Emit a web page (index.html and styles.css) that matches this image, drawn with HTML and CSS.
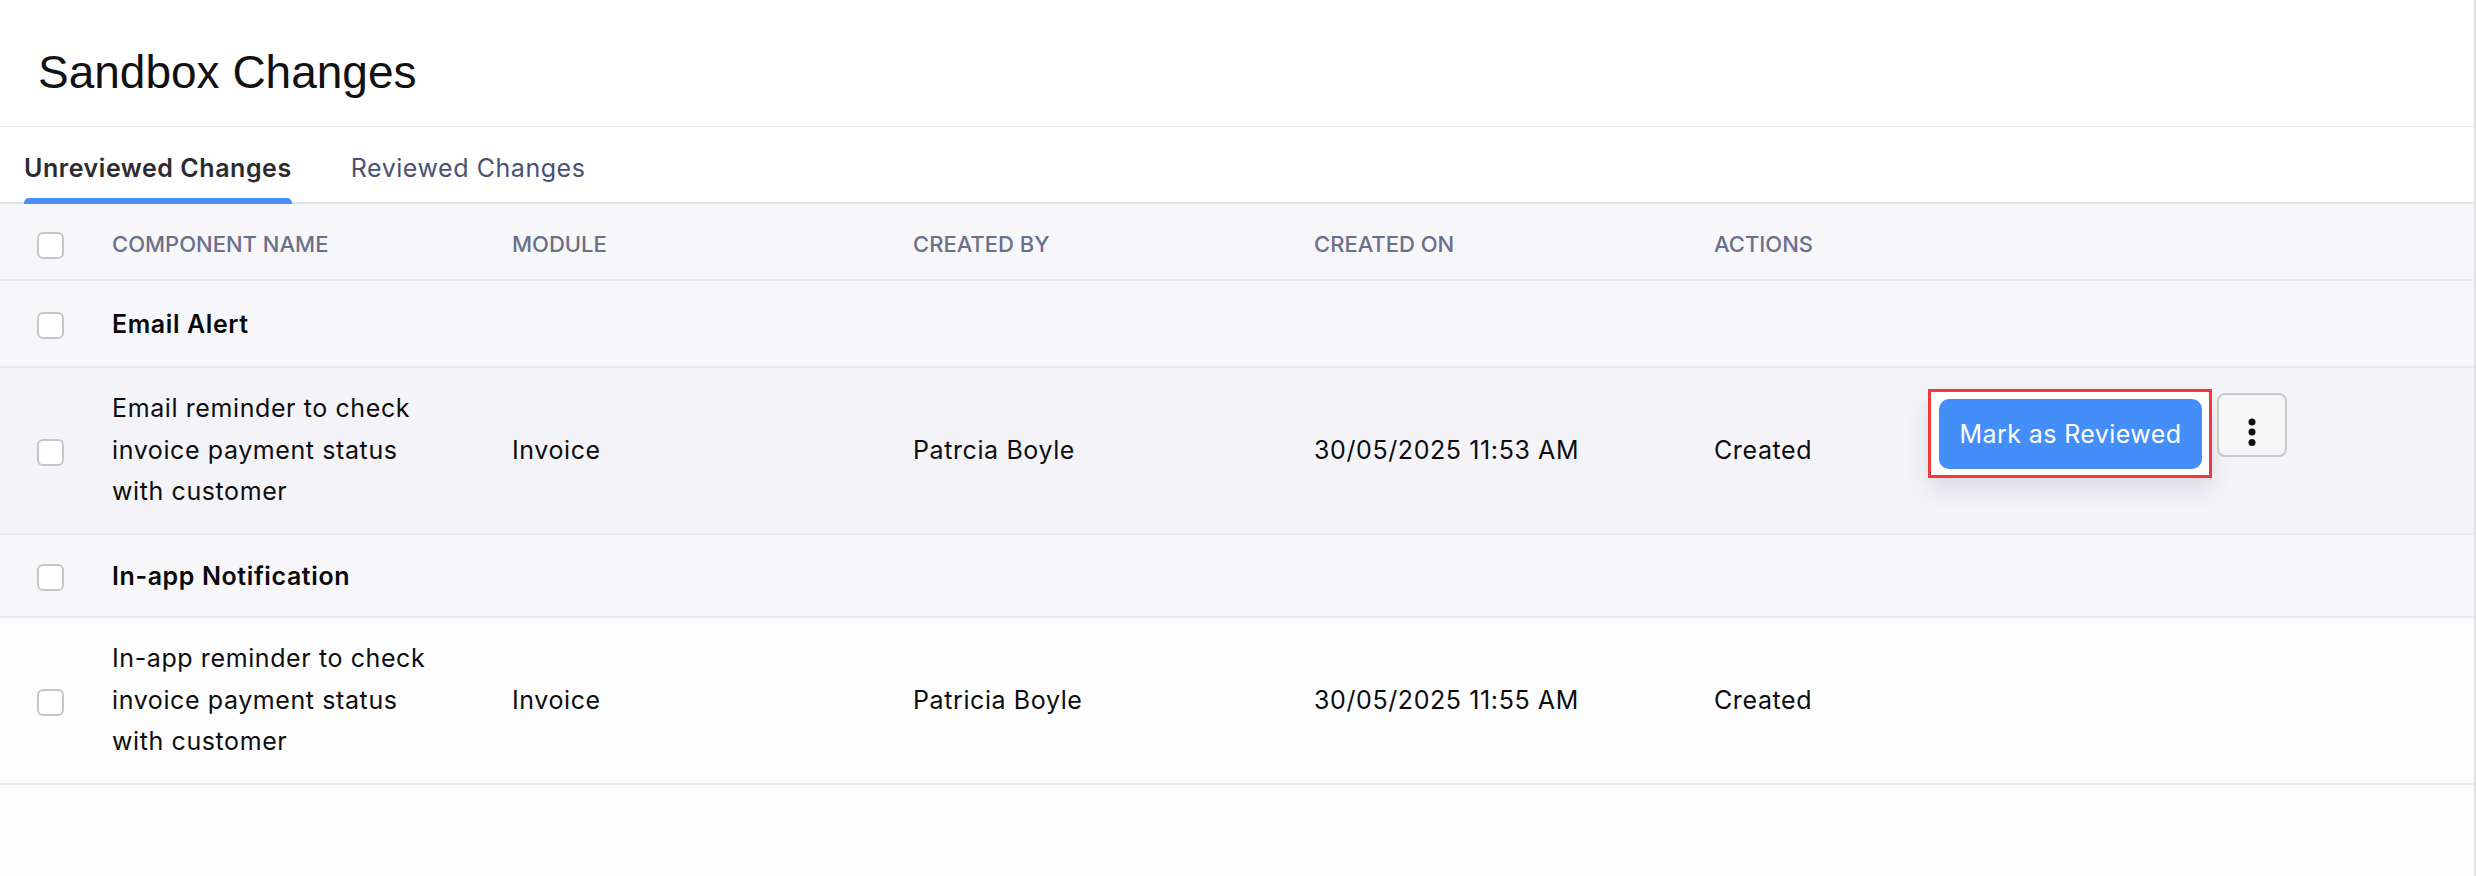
FILE: index.html
```html
<!DOCTYPE html>
<html lang="en">
<head>
<meta charset="utf-8">
<title>Sandbox Changes</title>
<link rel="stylesheet" href="styles.css">
</head>
<body>
<div class="page">
  <header class="title-bar">
    <h1 class="title">Sandbox Changes</h1>
  </header>
  <nav class="tabs">
    <div class="tab active"><span class="tab-label">Unreviewed Changes</span><span class="tab-bar"></span></div>
    <div class="tab"><span class="tab-label">Reviewed Changes</span></div>
  </nav>
  <table class="grid">
    <colgroup>
      <col class="c-check">
      <col class="c-name">
      <col class="c-col">
      <col class="c-col">
      <col class="c-date">
      <col class="c-status">
      <col>
    </colgroup>
    <thead>
      <tr class="head-row">
        <th class="cell-check"><span class="checkbox"></span></th>
        <th>COMPONENT NAME</th>
        <th>MODULE</th>
        <th>CREATED BY</th>
        <th>CREATED ON</th>
        <th>ACTIONS</th>
        <th></th>
      </tr>
    </thead>
    <tbody>
      <tr class="group-row g1">
        <td class="cell-check"><span class="checkbox"></span></td>
        <td class="group-name" colspan="6">Email Alert</td>
      </tr>
      <tr class="item-row hovered">
        <td class="cell-check"><span class="checkbox"></span></td>
        <td class="cell-name">Email reminder to check invoice payment status with customer</td>
        <td>Invoice</td>
        <td>Patrcia Boyle</td>
        <td>30/05/2025 11:53 AM</td>
        <td>Created</td>
        <td class="cell-actions">
          <div class="actions">
            <div class="highlight"><button class="btn-primary" type="button">Mark as Reviewed</button></div>
            <button class="kebab" type="button" aria-label="More">
              <svg width="8" height="28" viewBox="0 0 8 28"><circle cx="4" cy="4" r="3.5" fill="#111"/><circle cx="4" cy="14" r="3.5" fill="#111"/><circle cx="4" cy="24.5" r="3.5" fill="#111"/></svg>
            </button>
          </div>
        </td>
      </tr>
      <tr class="group-row g2">
        <td class="cell-check"><span class="checkbox"></span></td>
        <td class="group-name" colspan="6">In-app Notification</td>
      </tr>
      <tr class="item-row">
        <td class="cell-check"><span class="checkbox"></span></td>
        <td class="cell-name">In-app reminder to check invoice payment status with customer</td>
        <td>Invoice</td>
        <td>Patricia Boyle</td>
        <td>30/05/2025 11:55 AM</td>
        <td>Created</td>
        <td></td>
      </tr>
    </tbody>
  </table>
</div>
</body>
</html>
```

FILE: styles.css
```css
* { box-sizing: border-box; }

html, body {
  margin: 0;
  padding: 0;
  background: #fdfdfd;
}

body {
  font-family: Inter, "Noto Sans", "Liberation Sans", sans-serif;
  color: #111;
}

.page {
  min-height: 876px;
  border-right: 2px solid #e2e2e4;
  background: #fdfdfd;
}

.title-bar {
  height: 127px;
  padding: 46px 0 0 38px;
  background: #fff;
  border-bottom: 1px solid #e8e8ea;
}

.title {
  margin: 0;
  font-family: "Liberation Sans", Arial, sans-serif;
  font-weight: 400;
  font-size: 46px;
  line-height: 53px;
  color: #111;
}

.tabs {
  display: flex;
  gap: 59px;
  padding-left: 24px;
  background: #fefefe;
  border-bottom: 2px solid #e1e3e8;
}

.tab {
  display: flex;
  flex-direction: column;
  padding-top: 26px;
  margin-bottom: -2px;
}

.tab-label {
  font-size: 25px;
  line-height: 30px;
  font-weight: 400;
  letter-spacing: 0.55px;
  color: #4b5170;
  padding-bottom: 15px;
  white-space: nowrap;
}

.tab.active .tab-label {
  font-weight: 600;
  color: #2c2c30;
}

.tab-bar {
  display: block;
  height: 6px;
  background: #4a8ef6;
  border-radius: 5px 5px 0 0;
}

.grid {
  width: 100%;
  border-collapse: collapse;
  table-layout: fixed;
}

.c-check { width: 112px; }
.c-name { width: 400px; }
.c-col { width: 401px; }
.c-date { width: 400px; }
.c-status { width: 214px; }

.grid th,
.grid td {
  padding: 0;
  text-align: left;
  vertical-align: middle;
  border-bottom: 2px solid #e8e8ee;
}

.grid th {
  height: 76px;
  padding-top: 4px;
  font-size: 22px;
  line-height: 26px;
  font-weight: 500;
  color: #6b7089;
  background: #f7f7fa;
  white-space: nowrap;
}

.cell-check {
  padding-left: 37px !important;
}

.checkbox {
  display: block;
  width: 27px;
  height: 27px;
  margin-top: 3px;
  border: 2px solid #c6c6c8;
  border-radius: 6px;
  background: #fff;
}

.group-row td {
  background: #f7f7fa;
  font-size: 25px;
  line-height: 30px;
  letter-spacing: 0.6px;
}

.g1 td { height: 87px; }
.g2 td { height: 83px; }

.group-name {
  font-weight: 600;
  color: #0a0a0a;
}

.item-row td {
  height: 167px;
  font-size: 25px;
  line-height: 41.5px;
  letter-spacing: 0.6px;
  color: #0d0d0d;
  background: #fdfdfd;
}

.item-row.hovered td {
  background: #f4f4f8;
}

.cell-name {
  padding-right: 70px !important;
}

.grid td.cell-actions {
  vertical-align: top;
  padding-top: 21px;
  letter-spacing: 0;
}

.actions {
  display: flex;
  align-items: flex-start;
}

.highlight {
  padding: 7px 7px 6px 8px;
  border: 3px solid #f23a3c;
  background: #fff;
  box-shadow: 0 12px 22px rgba(40, 40, 70, 0.12);
}

.btn-primary {
  display: block;
  width: 263px;
  height: 70px;
  border: 0;
  border-radius: 10px;
  background: #448efa;
  color: #fff;
  font-family: Inter, "Noto Sans", sans-serif;
  font-size: 25px;
  font-weight: 400;
  letter-spacing: 0.4px;
  padding: 0;
}

.kebab {
  display: block;
  width: 70px;
  height: 64px;
  margin: 4px 0 0 5px;
  padding: 14px 0 0;
  border: 2px solid #c9c9cb;
  border-radius: 8px;
  background: #f6f6f7;
}

.kebab svg {
  display: block;
  margin: 0 auto;
}
```
